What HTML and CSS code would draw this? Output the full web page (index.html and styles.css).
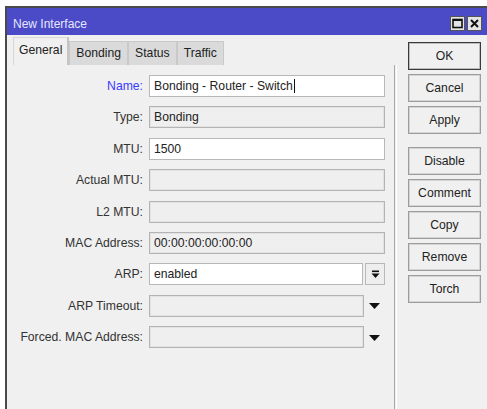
FILE: index.html
```html
<!DOCTYPE html>
<html>
<head>
<meta charset="utf-8">
<title>New Interface</title>
<link rel="stylesheet" href="styles.css">
</head>
<body>
<div class="window">
  <div class="titlebar">
    <span class="title">New Interface</span>
    <div class="ctrls">
      <span class="ctrl"><svg width="11" height="11" viewBox="0 0 11 11"><rect x="1" y="1.5" width="9" height="8" fill="none" stroke="#111" stroke-width="1.6"/><rect x="1" y="1" width="9" height="2" fill="#111"/></svg></span>
      <span class="ctrl"><svg width="11" height="11" viewBox="0 0 11 11"><path d="M2 2 L9 9 M9 2 L2 9" stroke="#111" stroke-width="2"/></svg></span>
    </div>
  </div>
  <div class="body">
    <div class="main">
      <div class="tabs">
        <div class="tab active">General</div>
        <div class="tab">Bonding</div>
        <div class="tab">Status</div>
        <div class="tab">Traffic</div>
      </div>
      <div class="form">
        <div class="row">
          <span class="lbl lbl-focus">Name:</span>
          <div class="field edit">Bonding - Router - Switch<span class="caret"></span></div>
        </div>
        <div class="row">
          <span class="lbl">Type:</span>
          <div class="field">Bonding</div>
        </div>
        <div class="row">
          <span class="lbl">MTU:</span>
          <div class="field edit">1500</div>
        </div>
        <div class="row">
          <span class="lbl">Actual MTU:</span>
          <div class="field"></div>
        </div>
        <div class="row">
          <span class="lbl">L2 MTU:</span>
          <div class="field"></div>
        </div>
        <div class="row">
          <span class="lbl">MAC Address:</span>
          <div class="field">00:00:00:00:00:00</div>
        </div>
        <div class="row">
          <span class="lbl">ARP:</span>
          <div class="field edit short">enabled</div>
          <span class="dropbtn"><svg width="9" height="9" viewBox="0 0 9 9"><rect x="1" y="0.5" width="7" height="1.6" fill="#111"/><path d="M0.5 3.5 H8.5 L4.5 8 Z" fill="#111"/></svg></span>
        </div>
        <div class="row">
          <span class="lbl">ARP Timeout:</span>
          <div class="field short2"></div>
          <span class="droparrow"><svg width="11" height="6" viewBox="0 0 11 6"><path d="M0 0 H11 L5.5 6 Z" fill="#111"/></svg></span>
        </div>
        <div class="row">
          <span class="lbl">Forced. MAC Address:</span>
          <div class="field short2"></div>
          <span class="droparrow"><svg width="11" height="6" viewBox="0 0 11 6"><path d="M0 0 H11 L5.5 6 Z" fill="#111"/></svg></span>
        </div>
      </div>
    </div>
    <div class="sep"></div>
    <div class="side">
      <button class="btn default">OK</button>
      <button class="btn">Cancel</button>
      <button class="btn">Apply</button>
      <button class="btn group">Disable</button>
      <button class="btn">Comment</button>
      <button class="btn">Copy</button>
      <button class="btn">Remove</button>
      <button class="btn">Torch</button>
    </div>
  </div>
</div>
</body>
</html>
```
FILE: styles.css
```css
html, body {
  margin: 0;
  padding: 0;
  background: #ffffff;
  overflow: hidden;
}

body {
  font-family: "Liberation Sans", Arial, sans-serif;
  font-size: 12.2px;
  color: #222;
  width: 487px;
  height: 409px;
}

.window {
  margin: 6px 0 0 5px;
  border-top: 2px solid #4a4a4a;
  border-left: 2px solid #4a4a4a;
  height: 401px;
  width: 482px;
  background: #f0f0f0;
  display: flex;
  flex-direction: column;
}

.titlebar {
  height: 27px;
  background: #4b4bc8;
  display: flex;
  align-items: center;
  justify-content: space-between;
  padding: 0 6px 0 6px;
  flex: none;
}

.title {
  color: #e6e6ff;
  font-size: 12px;
  padding-top: 5px;
}

.ctrls {
  display: flex;
  gap: 2px;
  padding-top: 4px;
  margin-right: 1px;
}

.ctrl {
  width: 15px;
  height: 15px;
  box-sizing: border-box;
  background: #e4e4e4;
  border: 1px solid #555;
  display: flex;
  align-items: center;
  justify-content: center;
}

.body {
  flex: 1;
  display: flex;
}

.main {
  width: 387px;
  flex: none;
}

.tabs {
  display: flex;
  align-items: flex-end;
  margin-top: 2px;
  height: 28px;
  padding-left: 6px;
}

.tab {
  height: 24px;
  box-sizing: border-box;
  padding: 0 6px;
  line-height: 22px;
  background: #dadada;
  border: 1px solid #c9c9c9;
  border-bottom: none;
  color: #222;
}

.tab.active {
  height: 28px;
  line-height: 24px;
  background: #f0f0f0;
  border-color: #d8d8d8;
  border-right: 2px solid #c4c4c4;
  padding: 0 5px 0 5px;
}

.form {
  padding-top: 10px;
  display: flex;
  flex-direction: column;
  gap: 9.375px;
}

.row {
  display: flex;
  align-items: center;
  height: 22px;
}

.lbl {
  width: 136px;
  text-align: right;
  margin-right: 6px;
  flex: none;
  color: #333;
  white-space: nowrap;
}

.lbl-focus {
  color: #3a3aff;
}

.field {
  width: 236px;
  height: 22px;
  box-sizing: border-box;
  border: 1px solid #b4b4b4;
  box-shadow: inset 0 0 0 1px #e2e2e2;
  background: #efefef;
  padding: 0 4px;
  line-height: 20px;
  color: #222;
  white-space: nowrap;
  display: flex;
  align-items: center;
}

.field.edit {
  background: #ffffff;
  box-shadow: none;
  border-color: #b8b8b8;
}

.field.short {
  width: 214px;
}

.field.short2 {
  width: 215px;
}

.caret {
  display: inline-block;
  width: 1px;
  height: 14px;
  background: #111;
  margin-left: 1px;
}

.dropbtn {
  width: 20px;
  height: 22px;
  box-sizing: border-box;
  margin-left: 2px;
  border: 1px solid #b8b8b8;
  background: #eeeeee;
  display: flex;
  align-items: center;
  justify-content: center;
}

.droparrow {
  width: 21px;
  display: flex;
  justify-content: center;
  padding-top: 1px;
}

.sep {
  width: 1px;
  border-left: 1px solid #a8a8a8;
  border-right: 1px solid #ffffff;
  margin-top: 30px;
}

.side {
  padding: 7px 0 0 11px;
  display: flex;
  flex-direction: column;
  gap: 4px;
}

.btn {
  width: 73px;
  height: 28px;
  box-sizing: border-box;
  font-family: "Liberation Sans", Arial, sans-serif;
  font-size: 12.2px;
  color: #222;
  background: #f0f0f0;
  border: 1px solid #9c9c9c;
  box-shadow: inset 0 0 0 1px #d4d4d4;
  padding: 0;
  margin: 0;
}

.btn.default {
  border: 1px solid #3a3a3a;
  box-shadow: inset 0 0 0 1px #bdbdbd;
}

.btn.group {
  margin-top: 9px;
}
```
